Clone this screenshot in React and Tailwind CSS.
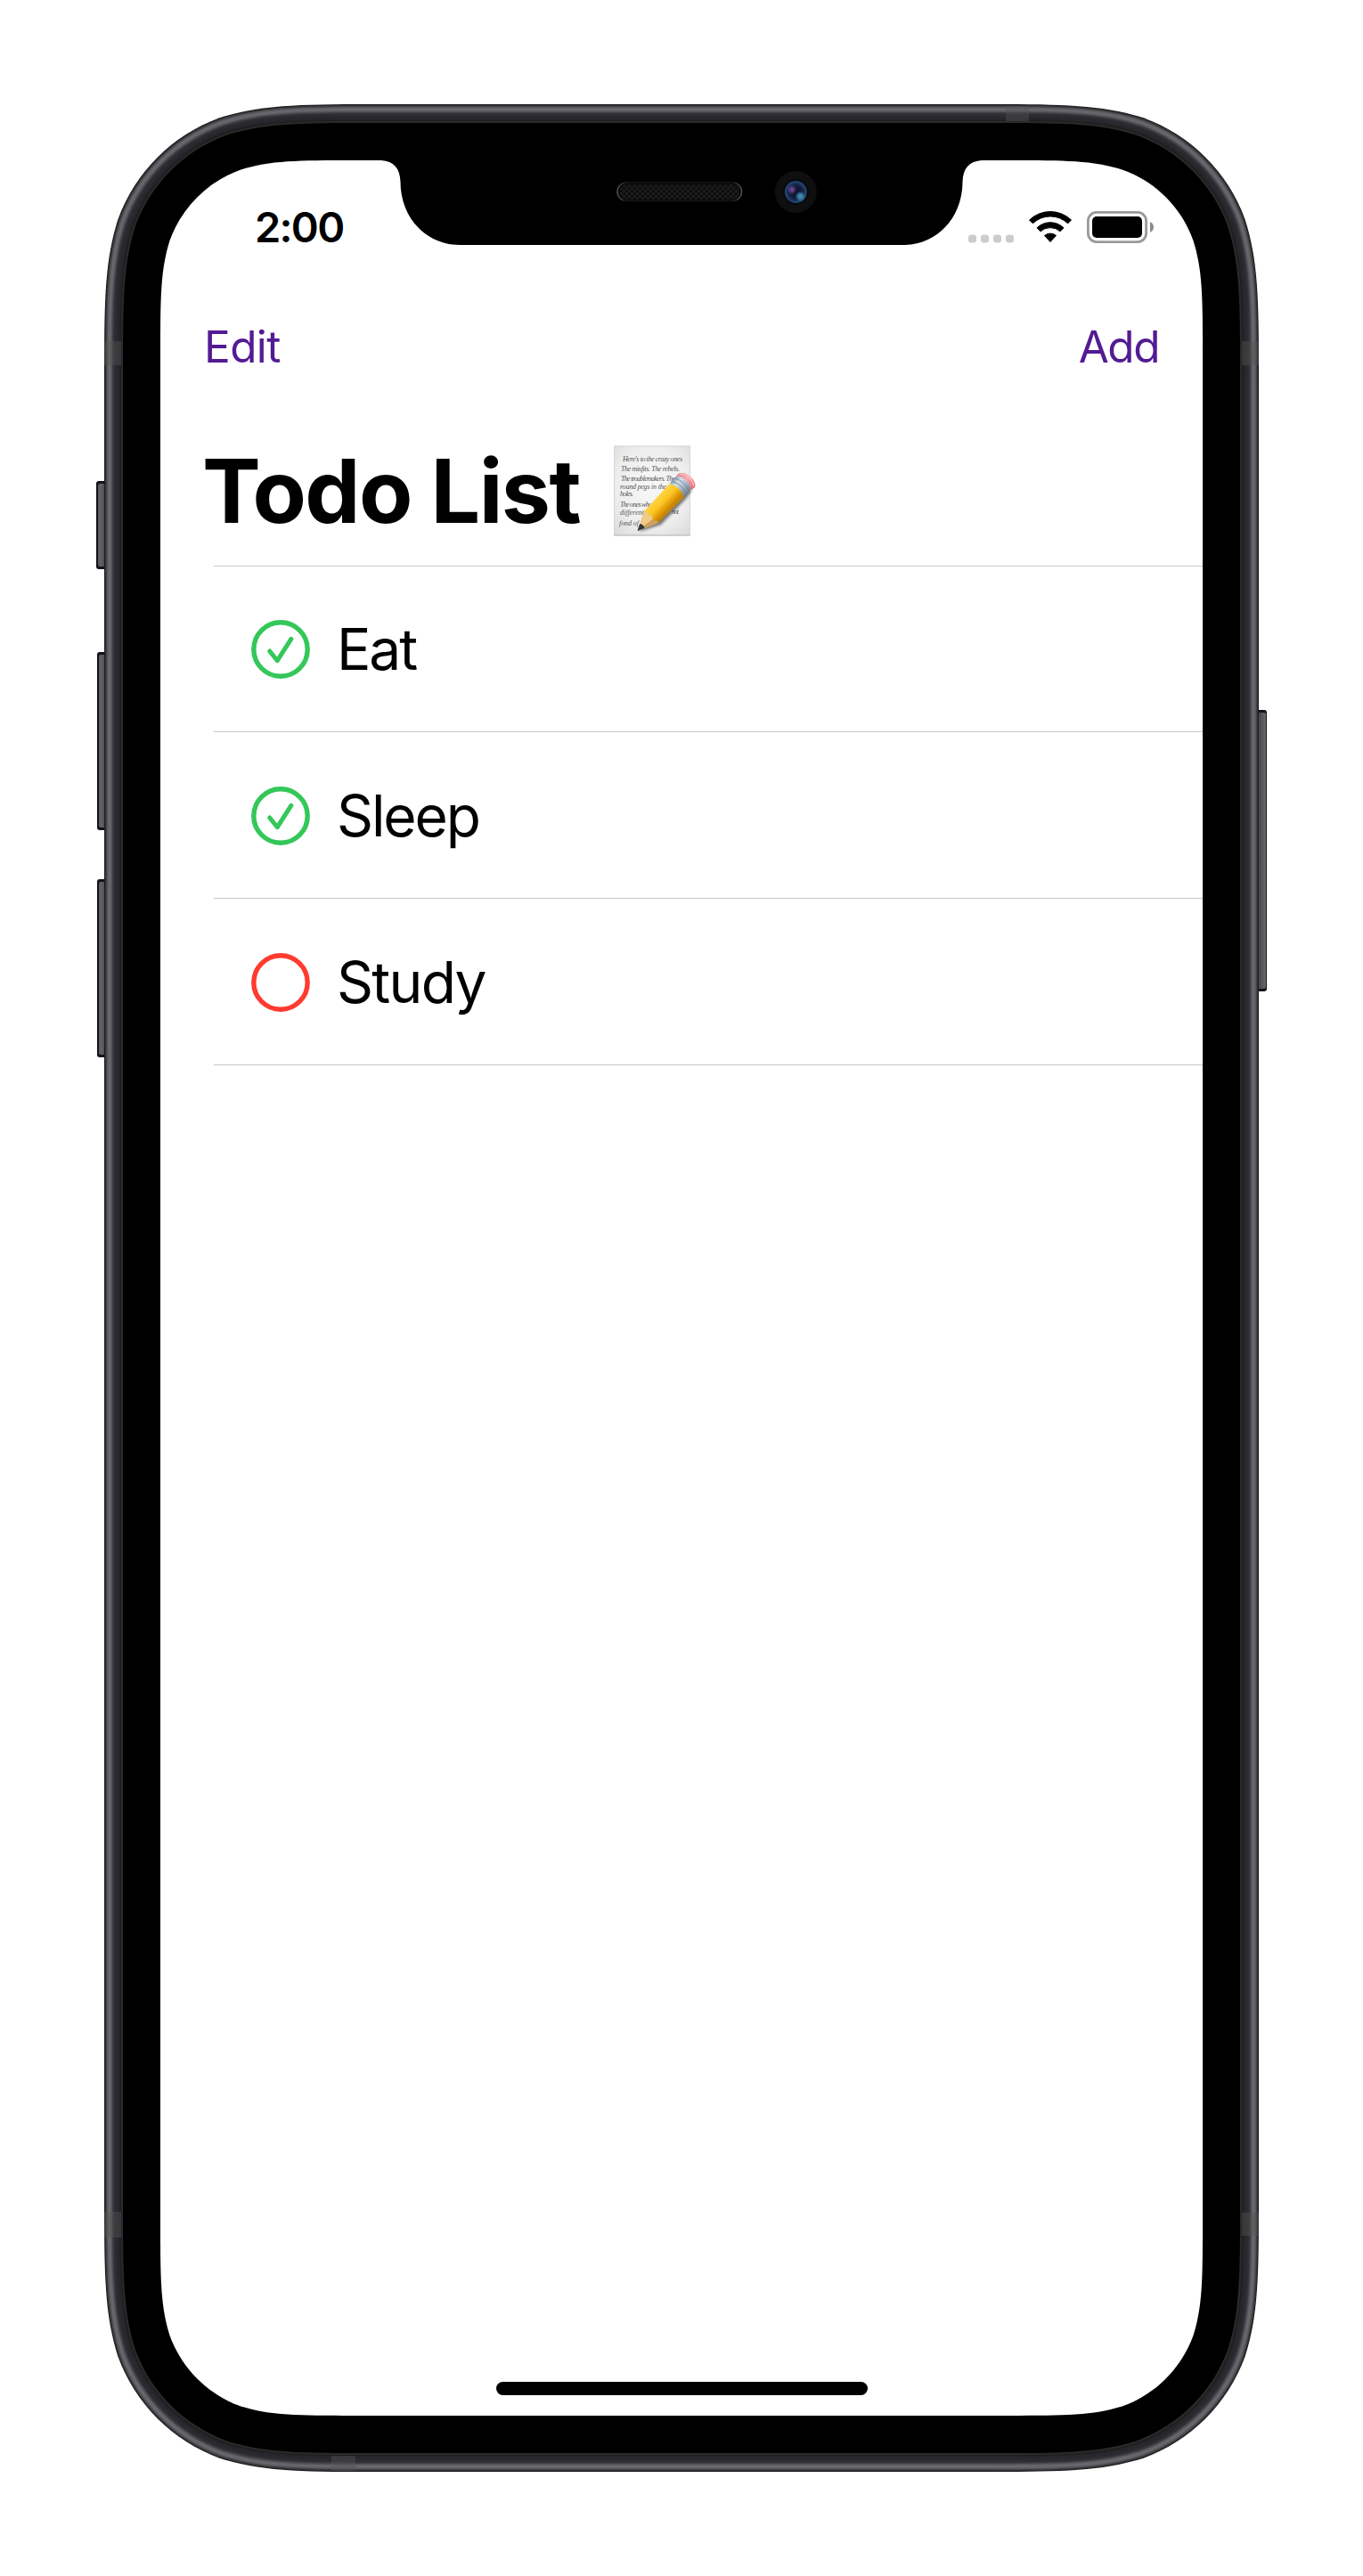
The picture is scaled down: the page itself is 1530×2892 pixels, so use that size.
import React from 'react';

const RIM = [
  '#1d1d1f', '#333336', '#434347', '#55555a', '#616166', '#67676c', '#67676c',
  '#5f5f64', '#505055', '#404045', '#34343a', '#2e2e34', '#2b2b31', '#29292f',
  '#29292f', '#27272d', '#26262b', '#222226', '#1e1e20', '#2b2b2a', '#2b2b2a',
];

// Rounded rectangle with curvature-continuous corners.
function smoothRect(x, y, w, h, r) {
  const R = x + w;
  const B = y + h;
  const a = 1.52866498 * r;
  const b = 1.08849296 * r;
  const c = 0.86840694 * r;
  const d = 0.63149379 * r;
  const e = 0.07491139 * r;
  const f = 0.37282383 * r;
  const g = 0.16905956 * r;
  return [
    `M${x + a},${y} L${R - a},${y}`,
    `C${R - b},${y} ${R - c},${y} ${R - d},${y + e}`,
    `C${R - f},${y + g} ${R - g},${y + f} ${R - e},${y + d}`,
    `C${R},${y + c} ${R},${y + b} ${R},${y + a}`,
    `L${R},${B - a}`,
    `C${R},${B - b} ${R},${B - c} ${R - e},${B - d}`,
    `C${R - g},${B - f} ${R - f},${B - g} ${R - d},${B - e}`,
    `C${R - c},${B} ${R - b},${B} ${R - a},${B}`,
    `L${x + a},${B}`,
    `C${x + b},${B} ${x + c},${B} ${x + d},${B - e}`,
    `C${x + f},${B - g} ${x + g},${B - f} ${x + e},${B - d}`,
    `C${x},${B - c} ${x},${B - b} ${x},${B - a}`,
    `L${x},${y + a}`,
    `C${x},${y + b} ${x},${y + c} ${x + e},${y + d}`,
    `C${x + g},${y + f} ${x + f},${y + g} ${x + d},${y + e}`,
    `C${x + c},${y} ${x + b},${y} ${x + a},${y} Z`,
  ].join(' ');
}

function LeftButton({ x, y, w, h }) {
  return (
    <g>
      <rect x={x} y={y} width={w + 6} height={h} rx="3" fill="#141418" />
      <rect x={x + 2} y={y + 3} width={w + 2} height={h - 6} rx="2" fill="url(#button-left)" />
    </g>
  );
}

function PhoneBody() {
  return (
    <svg className="absolute inset-0" width="1530" height="2892" viewBox="0 0 1530 2892" aria-hidden="true">
      <defs>
        <linearGradient id="button-left">
          <stop offset="0" stopColor="#5a5a60" />
          <stop offset="0.3" stopColor="#626267" />
          <stop offset="0.75" stopColor="#45454a" />
        </linearGradient>
        <linearGradient id="button-right">
          <stop offset="0.4" stopColor="#48484d" />
          <stop offset="0.65" stopColor="#57575c" />
          <stop offset="1" stopColor="#67676c" />
        </linearGradient>
        <pattern id="mesh" width="6" height="6" patternUnits="userSpaceOnUse">
          <rect width="6" height="6" fill="#0e0e0e" />
          <rect width="3" height="3" fill="#1c1c1c" />
          <rect x="3" y="3" width="3" height="3" fill="#1c1c1c" />
        </pattern>
        <linearGradient id="speaker-edge">
          <stop offset="0" stopColor="#555555" />
          <stop offset="0.07" stopColor="#161616" />
          <stop offset="0.93" stopColor="#161616" />
          <stop offset="1" stopColor="#555555" />
        </linearGradient>
        <radialGradient id="lens">
          <stop offset="0" stopColor="#0c1024" />
          <stop offset="0.55" stopColor="#121a38" />
          <stop offset="1" stopColor="#244a78" />
        </radialGradient>
        <radialGradient id="flare-violet">
          <stop offset="0" stopColor="#7d51ad" />
          <stop offset="1" stopColor="#7d51ad" stopOpacity="0" />
        </radialGradient>
        <radialGradient id="flare-cyan">
          <stop offset="0" stopColor="#3f8ab0" />
          <stop offset="0.4" stopColor="#387fa5" />
          <stop offset="1" stopColor="#387fa5" stopOpacity="0" />
        </radialGradient>
      </defs>

      <LeftButton x={108} y={540} w={9} h={99} />
      <LeftButton x={109} y={732} w={8} h={200} />
      <LeftButton x={109} y={987} w={8} h={200} />
      <g>
        <rect x="1407" y="797" width="15" height="316" rx="3" fill="#141418" />
        <rect x="1409" y="800" width="12" height="310" rx="2" fill="url(#button-right)" />
      </g>

      {RIM.map((color, i) => (
        <path key={i} d={smoothRect(117 + i, 117 + i, 1296 - 2 * i, 2658 - 2 * i, 205 - i)} fill={color} />
      ))}

      <g fill="#555555" fillOpacity="0.42">
        <rect x="117" y="383" width="19" height="27" />
        <rect x="1394" y="383" width="19" height="27" />
        <rect x="1129" y="119" width="26" height="17" />
        <rect x="117" y="2483" width="19" height="29" />
        <rect x="1394" y="2484" width="19" height="26" />
        <rect x="372" y="2757" width="27" height="17" />
      </g>

      <path d={smoothRect(138, 138, 1254, 2616, 184)} fill="#000000" />
      <path d={smoothRect(180, 180, 1170, 2532, 142)} fill="#ffffff" />
      <path
        d="M420,179 L428,180 C442,181 449,189 449.5,204 C449.5,244 478,275 516,275 L1014,275 C1052,275 1080.5,244 1080.5,204 C1081,189 1088,181 1102,180 L1110,179 Z"
        fill="#000000"
      />

      <rect x="693" y="205" width="139.500" height="20.500" rx="10.250" fill="#050505" stroke="url(#speaker-edge)" strokeWidth="1.500" />
      <rect x="695.500" y="207" width="134.500" height="17" rx="8.500" fill="url(#mesh)" />

      <circle cx="893.300" cy="215.500" r="23.500" fill="#0f0f0f" />
      <circle cx="893.300" cy="215.500" r="14" fill="#060608" />
      <circle cx="893.300" cy="215.500" r="12.500" fill="url(#lens)" />
      <circle cx="889" cy="213" r="5.500" fill="url(#flare-violet)" />
      <circle cx="898.500" cy="220.500" r="6" fill="url(#flare-cyan)" />
    </svg>
  );
}

function StatusIcons() {
  return (
    <svg width="208" height="38" viewBox="0 0 208 38" aria-hidden="true">
      <g fill="#cccccc">
        <rect x="0" y="27.500" width="9" height="9" rx="3.200" />
        <rect x="14" y="27.500" width="9" height="9" rx="3.200" />
        <rect x="28" y="27.500" width="9" height="9" rx="3.200" />
        <rect x="42" y="27.500" width="9" height="9" rx="3.200" />
      </g>
      <g fill="#000000" stroke="#000000" strokeWidth="1" strokeLinejoin="round">
        <path d="M68.500 11 A34 34 0 0 1 115.500 11 L111.700 14.800 A28.500 28.500 0 0 0 72.300 14.800 Z" />
        <path d="M77 19.800 A21.500 21.500 0 0 1 107 19.800 L103 23.800 A16.500 16.500 0 0 0 81 23.800 Z" />
        <path d="M85.500 28.500 A10 10 0 0 1 98.500 28.500 L92 35.500 Z" />
      </g>
      <rect x="134.400" y="2.400" width="65.200" height="33.200" rx="9.600" fill="none" stroke="#9a9a9a" strokeWidth="2.800" />
      <rect x="139" y="7" width="56" height="24" rx="5" fill="#000000" />
      <path d="M204 13 C209.300 15.500 209.300 22.500 204 25 Z" fill="#8a8a8a" />
    </svg>
  );
}

function MemoIcon() {
  return (
    <svg width="115" height="125" viewBox="0 0 115 125" className="shrink-0" aria-hidden="true">
      <defs>
        <radialGradient id="paper" cx="0.5" cy="0.45" r="0.7">
          <stop offset="0" stopColor="#f7f7f7" />
          <stop offset="0.65" stopColor="#eeeeee" />
          <stop offset="1" stopColor="#dcdcdc" />
        </radialGradient>
        <linearGradient id="barrel" x1="51" y1="62" x2="71" y2="81" gradientUnits="userSpaceOnUse">
          <stop offset="0" stopColor="#e0a412" />
          <stop offset="0.18" stopColor="#f5b91c" />
          <stop offset="0.3" stopColor="#ffd544" />
          <stop offset="0.62" stopColor="#fdc726" />
          <stop offset="0.8" stopColor="#eda90f" />
          <stop offset="1" stopColor="#c98505" />
        </linearGradient>
        <linearGradient id="ferrule" x1="74" y1="48" x2="92" y2="65" gradientUnits="userSpaceOnUse">
          <stop offset="0" stopColor="#7f93a6" />
          <stop offset="0.3" stopColor="#d3dfe9" />
          <stop offset="0.6" stopColor="#a9bac8" />
          <stop offset="1" stopColor="#6a7885" />
        </linearGradient>
        <linearGradient id="eraser" x1="82" y1="42" x2="99" y2="60" gradientUnits="userSpaceOnUse">
          <stop offset="0" stopColor="#e8848a" />
          <stop offset="0.4" stopColor="#f9aab0" />
          <stop offset="1" stopColor="#d96a72" />
        </linearGradient>
        <filter id="pencil-shadow" x="-20%" y="-20%" width="150%" height="150%">
          <feGaussianBlur stdDeviation="1.8" />
        </filter>
      </defs>
      <rect x="9" y="10.500" width="86" height="101" fill="url(#paper)" />
      <rect x="9.500" y="11" width="85" height="100" fill="none" stroke="#d6d6d6" />
      <rect x="9" y="110" width="86" height="1.500" fill="#c8c8c8" />
      <g fill="#555555" className="font-['Liberation_Serif',serif] text-[8px] italic">
        <text x="19" y="27.500" textLength="67">Here&apos;s to the crazy ones</text>
        <text x="17" y="38.500" textLength="66">The misfits. The rebels.</text>
        <text x="17" y="50" textLength="61">The troublemakers. The</text>
        <text x="16" y="59" textLength="52">round pegs in the</text>
        <text x="16" y="67" textLength="15">holes.</text>
        <text x="16" y="78.500" textLength="36">The ones who</text>
        <text x="16" y="88" textLength="27">different</text>
        <text x="74" y="87" textLength="8">not</text>
        <text x="15" y="99.500" textLength="22">fond of</text>
      </g>
      <path d="M37 107 L62 99 L90 70 L97 60 L84 60 L50 92 Z" fill="#000000" fillOpacity="0.5" filter="url(#pencil-shadow)" />
      <path d="M35.500 106 L43.500 82.500 C50 83 59 91 58.800 97 Z" fill="#efca88" />
      <path d="M35.500 106 L58.800 97 C58.600 94.500 57.500 93 55.500 90.500 Z" fill="#cfa05a" />
      <path d="M35.500 106 L38.200 98 C40.800 98.200 43.200 100.500 43.500 103 Z" fill="#33363a" />
      <path
        d="M43.500 83.500 L71.500 53 C79 54 86 61 87.800 68 L58.800 97 C57.800 94.500 56 93.500 53 94 C53 89.500 51 87.500 47.500 88 C47.500 85.500 46 84 43.500 83.500 Z"
        fill="url(#barrel)"
      />
      <path d="M53 92 L82.500 61" stroke="#e3a010" strokeWidth="0.900" fill="none" />
      <path d="M71.500 53 L79.500 44 C87 45 94.500 52 95.800 59.500 L87.800 68 C86 61 79 54 71.500 53 Z" fill="url(#ferrule)" />
      <path d="M73.700 50.500 C81.500 51.500 88.500 58.500 90 65.700 M76.800 47.200 C84.500 48.200 91.700 55.300 93.200 62.500" stroke="#73859a" strokeWidth="0.900" fill="none" />
      <path d="M79.500 44 L81.500 42 C89 37.500 103 49 100 57 L95.800 60.500 C94.500 52 87 45 79.500 44 Z" fill="url(#eraser)" />
      <path d="M83.500 42.500 C90 41.500 98 48.500 98.500 55.500" stroke="#fcc6ca" strokeWidth="1.200" fill="none" />
    </svg>
  );
}

function StatusCircle({ done }) {
  return (
    <svg width="66" height="66" viewBox="0 0 66 66" fill="none" className={done ? 'shrink-0 stroke-[#34c759]' : 'shrink-0 stroke-[#ff3b30]'} aria-hidden="true">
      <circle cx="33" cy="33" r="30.200" strokeWidth="5.400" />
      {done && <path d="M20.700 35 L29.300 45.700 L44.800 21.300" strokeWidth="5" strokeLinecap="round" strokeLinejoin="round" />}
    </svg>
  );
}

const TODOS = [
  { title: 'Eat', done: true, row: 'h-[186px] tracking-[-2.1px]' },
  { title: 'Sleep', done: true, row: 'h-[187px] pt-px tracking-[-2.1px]' },
  { title: 'Study', done: false, row: 'h-[187px] pt-px tracking-[-1.7px]' },
];

export default function App() {
  return (
    <div className="relative h-[2892px] w-[1530px] bg-white p-[180px] font-['Inter',sans-serif] text-black">
      <PhoneBody />
      <main className="relative flex h-[2532px] w-[1170px] flex-col">
        <header className="flex h-[150px] items-center justify-between pl-[106px] pr-[55px]">
          <time className="text-[47px] font-semibold tracking-[-1.7px]">2:00</time>
          <StatusIcons />
        </header>
        <nav className="flex h-[118px] items-center justify-between px-[49px] text-[49.5px] text-[#531b93]">
          <button type="button" className="tracking-[-0.6px]">Edit</button>
          <button type="button" className="tracking-[-1.5px]">Add</button>
        </nav>
        <div className="flex h-[187px] items-start pl-[47px] pt-[42px]">
          <h1 className="w-[453px] whitespace-nowrap text-[98.6px] font-bold leading-[122px] tracking-[-1.6px]">Todo List</h1>
          <MemoIcon />
        </div>
        <ul className="ml-[60px] border-t border-[#c6c6c8]">
          {TODOS.map(({ title, done, row }) => (
            <li key={title} className={`flex items-center gap-[30px] border-b border-[#c6c6c8] pl-[42px] text-[64px] ${row}`}>
              <StatusCircle done={done} />
              <span>{title}</span>
            </li>
          ))}
        </ul>
        <div className="mb-[23px] mt-auto h-[15px] w-[417px] self-center rounded-full bg-black" />
      </main>
    </div>
  );
}
